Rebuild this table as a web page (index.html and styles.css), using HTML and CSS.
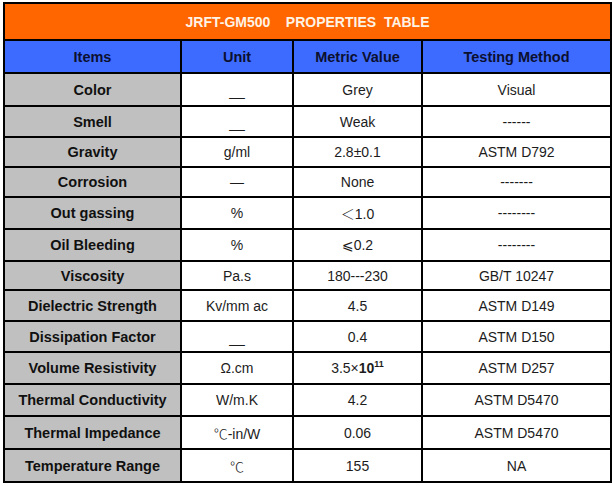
FILE: index.html
```html
<!DOCTYPE html>
<html>
<head>
<meta charset="utf-8">
<link rel="stylesheet" href="styles.css">
</head>
<body>
<div class="sheet">
<table class="props">
  <colgroup>
    <col class="c1"><col class="c2"><col class="c3"><col class="c4">
  </colgroup>
  <tr class="title h37"><td colspan="4">JRFT-GM500    PROPERTIES  TABLE</td></tr>
  <tr class="head h33"><td>Items</td><td>Unit</td><td>Metric Value</td><td>Testing Method</td></tr>
  <tr class="h33"><th>Color</th><td><span class="low">__</span></td><td>Grey</td><td>Visual</td></tr>
  <tr class="h31"><th>Smell</th><td><span class="low">__</span></td><td>Weak</td><td>------</td></tr>
  <tr class="h30"><th>Gravity</th><td>g/ml</td><td>2.8±0.1</td><td>ASTM D792</td></tr>
  <tr class="h30"><th>Corrosion</th><td>—</td><td>None</td><td>-------</td></tr>
  <tr class="h32"><th>Out gassing</th><td>%</td><td><span class="cjk">＜</span>1.0</td><td>--------</td></tr>
  <tr class="h32"><th>Oil Bleeding</th><td>%</td><td><span class="sym">⩽</span>0.2</td><td>--------</td></tr>
  <tr class="h29"><th>Viscosity</th><td>Pa.s</td><td>180---230</td><td>GB/T 10247</td></tr>
  <tr class="h31"><th>Dielectric Strength</th><td>Kv/mm ac</td><td>4.5</td><td>ASTM D149</td></tr>
  <tr class="h31"><th>Dissipation Factor</th><td><span class="low">__</span></td><td>0.4</td><td>ASTM D150</td></tr>
  <tr class="h32"><th>Volume Resistivity</th><td>Ω.cm</td><td>3.5×<b>10<sup>11</sup></b></td><td>ASTM D257</td></tr>
  <tr class="h32"><th>Thermal Conductivity</th><td>W/m.K</td><td>4.2</td><td>ASTM D5470</td></tr>
  <tr class="h33"><th>Thermal Impedance</th><td><span class="cjk">℃</span>-in/W</td><td>0.06</td><td>ASTM D5470</td></tr>
  <tr class="h33"><th>Temperature Range</th><td><span class="cjk">℃</span></td><td>155</td><td>NA</td></tr>
</table>
</div>
</body>
</html>
```

FILE: styles.css
```css
html, body {
  margin: 0;
  padding: 0;
  background: #ffffff;
}
.sheet {
  padding: 2px 2px 0 3px;
}
.props {
  border-collapse: collapse;
  table-layout: fixed;
  width: 607px;
  font-family: Arial, "Liberation Sans", sans-serif;
  font-size: 14px;
  color: #1c1c1c;
}
.c1 { width: 177px; }
.c2 { width: 112px; }
.c3 { width: 129px; }
.c4 { width: 189px; }
.props td, .props th {
  border: 2px solid #000;
  text-align: center;
  vertical-align: middle;
  padding: 0;
  white-space: pre;
}
.props th {
  background: #c0c0c0;
  font-weight: bold;
  font-size: 14.5px;
  color: #101010;
}
.title td {
  background: #ff6600;
  color: #fff3e6;
  font-weight: bold;
  font-size: 14px;
}
.head td {
  background: #3d6bff;
  color: #0c1030;
  font-weight: bold;
  font-size: 14.5px;
}
.h37 { height: 37px; }
.h33 { height: 33px; }
.h32 { height: 32px; }
.h31 { height: 31px; }
.h30 { height: 30px; }
.h29 { height: 29px; }
.low {
  position: relative;
  top: 1px;
}
.cjk {
  font-family: "Noto Sans CJK SC", sans-serif;
  font-weight: 300;
}
.sym {
  font-family: "DejaVu Sans", sans-serif;
  font-size: 14px;
}
sup {
  font-size: 9px;
  vertical-align: 6px;
  line-height: 0;
}
```
